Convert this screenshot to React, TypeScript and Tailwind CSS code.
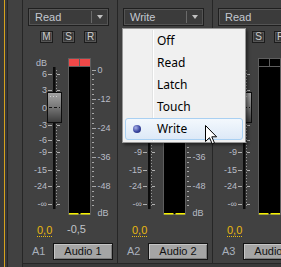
import React from 'react';

type Channel = {
  id: string;
  name: string;
  mode: string;
  clip?: boolean;
  peak?: string;
};

const channels: Channel[] = [
  { id: 'A1', name: 'Audio 1', mode: 'Read', clip: true, peak: '-0,5' },
  { id: 'A2', name: 'Audio 2', mode: 'Write' },
  { id: 'A3', name: 'Audio 3', mode: 'Read' },
];

const leftScale: [string, number][] = [
  ['6', 74],
  ['3', 90],
  ['0', 108],
  ['-3', 125],
  ['-6', 140],
  ['-9', 152],
  ['-15', 170],
  ['-24', 186],
  ['-∞', 204],
];

const rightScale: [string, number][] = [
  ['0', 69.5],
  ['-12', 98.6],
  ['-24', 127.7],
  ['-36', 156.8],
  ['-48', 185.9],
];

const menuItems = ['Off', 'Read', 'Latch', 'Touch', 'Write'];

// fader scale + level meter, drawn in strip coordinates (y 43..221)
function FaderMeter({ clip }: { clip?: boolean }) {
  const ticks = Array.from({ length: 29 }, (_, i) => 69.5 + (i * 29.1) / 6);
  return (
    <svg width={95} height={178} viewBox="0 43 95 178" className="block">
      <defs>
        <linearGradient id="knob" x1="0" y1="0" x2="0" y2="1">
          <stop offset="0" stopColor="#a6a6a6" />
          <stop offset="0.5" stopColor="#767676" />
          <stop offset="1" stopColor="#3a3a3a" />
        </linearGradient>
      </defs>
      <g fontFamily="'Liberation Sans', Arial, sans-serif" fontSize="9" fill="#b8bcc6">
        <text x={24} y={66} textAnchor="end">dB</text>
        {leftScale.map(([l, y]) => (
          <text key={l} x={24} y={y + 3.3} textAnchor="end">{l}</text>
        ))}
        {rightScale.map(([l, y]) => (
          <text key={l} x={74.5} y={y + 3.3}>{l}</text>
        ))}
        <text x={74.5} y={215.5}>dB</text>
      </g>
      {/* fader track */}
      <rect x={30} y={67} width={2.5} height={142} fill="#0c0c0c" />
      <line x1={33.5} x2={33.5} y1={70} y2={206} stroke="#9a9a9a" strokeDasharray="1 2" />
      {leftScale.map(([l, y]) => (
        <g key={l} stroke="#b0b0b0">
          <line x1={25} x2={29} y1={y + 0.5} y2={y + 0.5} />
          <line x1={34} x2={37} y1={y + 0.5} y2={y + 0.5} />
        </g>
      ))}
      {/* knob */}
      <rect x={24.5} y={92.5} width={14} height={30} fill="url(#knob)" stroke="#0e0e0e" />
      <line x1={26} x2={37} y1={107.5} y2={107.5} stroke="#151515" strokeDasharray="3 2" />
      <line x1={27} x2={36} y1={96.5} y2={96.5} stroke="#d0d0d0" strokeDasharray="1 2" />
      {/* meter */}
      <rect x={45.5} y={58.5} width={22} height={156} fill="#000" stroke="#5e5e5e" />
      {clip && (
        <g fill="#ef4848">
          <rect x={46} y={59} width={10} height={7.5} />
          <rect x={57} y={59} width={10} height={7.5} />
        </g>
      )}
      <line x1={56.5} x2={56.5} y1={58.5} y2={66.5} stroke="#5e5e5e" />
      <line x1={45.5} x2={67.5} y1={66.5} y2={66.5} stroke="#5e5e5e" />
      <g fill="#f5f000">
        <rect x={46} y={213} width={9.5} height={1.5} />
        <rect x={57.5} y={213} width={9.5} height={1.5} />
      </g>
      {ticks.map((y, i) => (
        <line
          key={i}
          x1={69}
          x2={i % 6 === 0 ? 73 : 71}
          y1={Math.round(y) + 0.5}
          y2={Math.round(y) + 0.5}
          stroke="#a8a8a8"
        />
      ))}
    </svg>
  );
}

function Strip({ ch }: { ch: Channel }) {
  return (
    <div className="w-[95px] h-[264px] shrink-0 flex flex-col bg-[#414141] border-r border-b border-[#262626]">
      <div className="ml-[5px] mt-[8px] w-[81px] h-[18px] flex items-center border border-[#1f1f1f] bg-[#3b3b3b] shadow-[inset_0_0_0_1px_#545454]">
        <span className="flex-1 pl-[6px] text-[11px] leading-none text-[#c4c8d0]">{ch.mode}</span>
        <div className="w-px h-[12px] bg-[#6a6a6a]" />
        <div className="w-[16px] flex justify-center">
          <div className="border-x-[3.5px] border-x-transparent border-t-[4px] border-t-[#c0c0c0]" />
        </div>
      </div>
      <div className="ml-[17px] mt-[5px] flex gap-[9px]">
        {['M', 'S', 'R'].map((l) => (
          <div
            key={l}
            className="w-[13px] h-[12px] flex items-center justify-center border border-[#1c1c1c] bg-[#3a3a3a] shadow-[inset_0_0_0_1px_#565656] text-[10px] leading-none text-[#cccccc]"
          >
            {l}
          </div>
        ))}
      </div>
      <FaderMeter clip={ch.clip} />
      <div className="h-[16px] flex items-center pl-[14px]">
        <div className="w-[30px]">
          <span className="inline-block text-[11px] leading-[12px] text-[#e8b810] border-b border-dotted border-[#e8b810]">
            0,0
          </span>
        </div>
        {ch.peak && <span className="text-[11px] leading-[12px] text-[#c0c4ca]">{ch.peak}</span>}
      </div>
      <div className="mt-[6px] h-[17px] flex items-center pl-[9px]">
        <span className="w-[21px] text-[11px] leading-none text-[#a8b0bc]">{ch.id}</span>
        <div className="w-[60px] h-[17px] shrink-0 flex items-center justify-center border border-[#141414] bg-[#a5a5a5] shadow-[inset_1px_1px_0_#c6c6c6,inset_-1px_-1px_0_#7c7c7c] text-[11px] leading-none text-[#111]">
          {ch.name}
        </div>
      </div>
    </div>
  );
}

function AutomationMenu() {
  return (
    <div className="absolute left-[122px] top-[28px] w-[124px] pt-[1px] pb-[2px] border border-[#979797] bg-[#f0f0f0] shadow-[2px_2px_3px_rgba(0,0,0,0.45)] font-['Noto_Sans',sans-serif]">
      <div className="absolute left-[29px] top-[1px] bottom-[1px] w-px bg-[#e2e3e3]" />
      <div className="absolute left-[30px] top-[1px] bottom-[1px] w-px bg-white" />
      {menuItems.map((item) => {
        const selected = item === 'Write';
        return (
          <div
            key={item}
            className={
              selected
                ? 'relative mx-[2px] h-[22px] flex items-center rounded-[3px] border border-[#a9d0f2] bg-gradient-to-b from-[#f3f8fd] to-[#dde9f7]'
                : 'relative mx-[2px] h-[22px] flex items-center border border-transparent'
            }
          >
            <div className="w-[31px] flex justify-center pr-[11px] pl-[1px]">
              {selected && (
                <div className="w-[8px] h-[8px] rounded-full bg-[radial-gradient(circle_at_35%_35%,#a8b0e8,#3a46a0_55%,#1c2466)]" />
              )}
            </div>
            <span className="text-[12px] leading-none text-black">{item}</span>
          </div>
        );
      })}
    </div>
  );
}

function Cursor() {
  return (
    <svg width={13} height={20} viewBox="0 0 13 20" className="absolute left-[205px] top-[125px]">
      <path
        d="M0.5 0.5 L0.5 16.5 L4.5 12.7 L7.2 18.8 L9.4 17.8 L6.8 11.8 L11.6 11.8 Z"
        fill="#fff"
        stroke="#000"
        strokeLinejoin="round"
      />
    </svg>
  );
}

export default function App() {
  return (
    <div className="relative w-[281px] h-[267px] overflow-hidden flex bg-[#393939] font-['Liberation_Sans',Arial,sans-serif]">
      <div className="w-[8px] h-full shrink-0 pl-[4px] border-r border-[#262626]">
        <div className="w-px h-full bg-[#d6a21e]" />
      </div>
      <div className="w-[15px] h-full shrink-0 bg-[#414141] border-r border-[#262626]" />
      {channels.map((ch) => (
        <Strip key={ch.id} ch={ch} />
      ))}
      <AutomationMenu />
      <Cursor />
    </div>
  );
}
